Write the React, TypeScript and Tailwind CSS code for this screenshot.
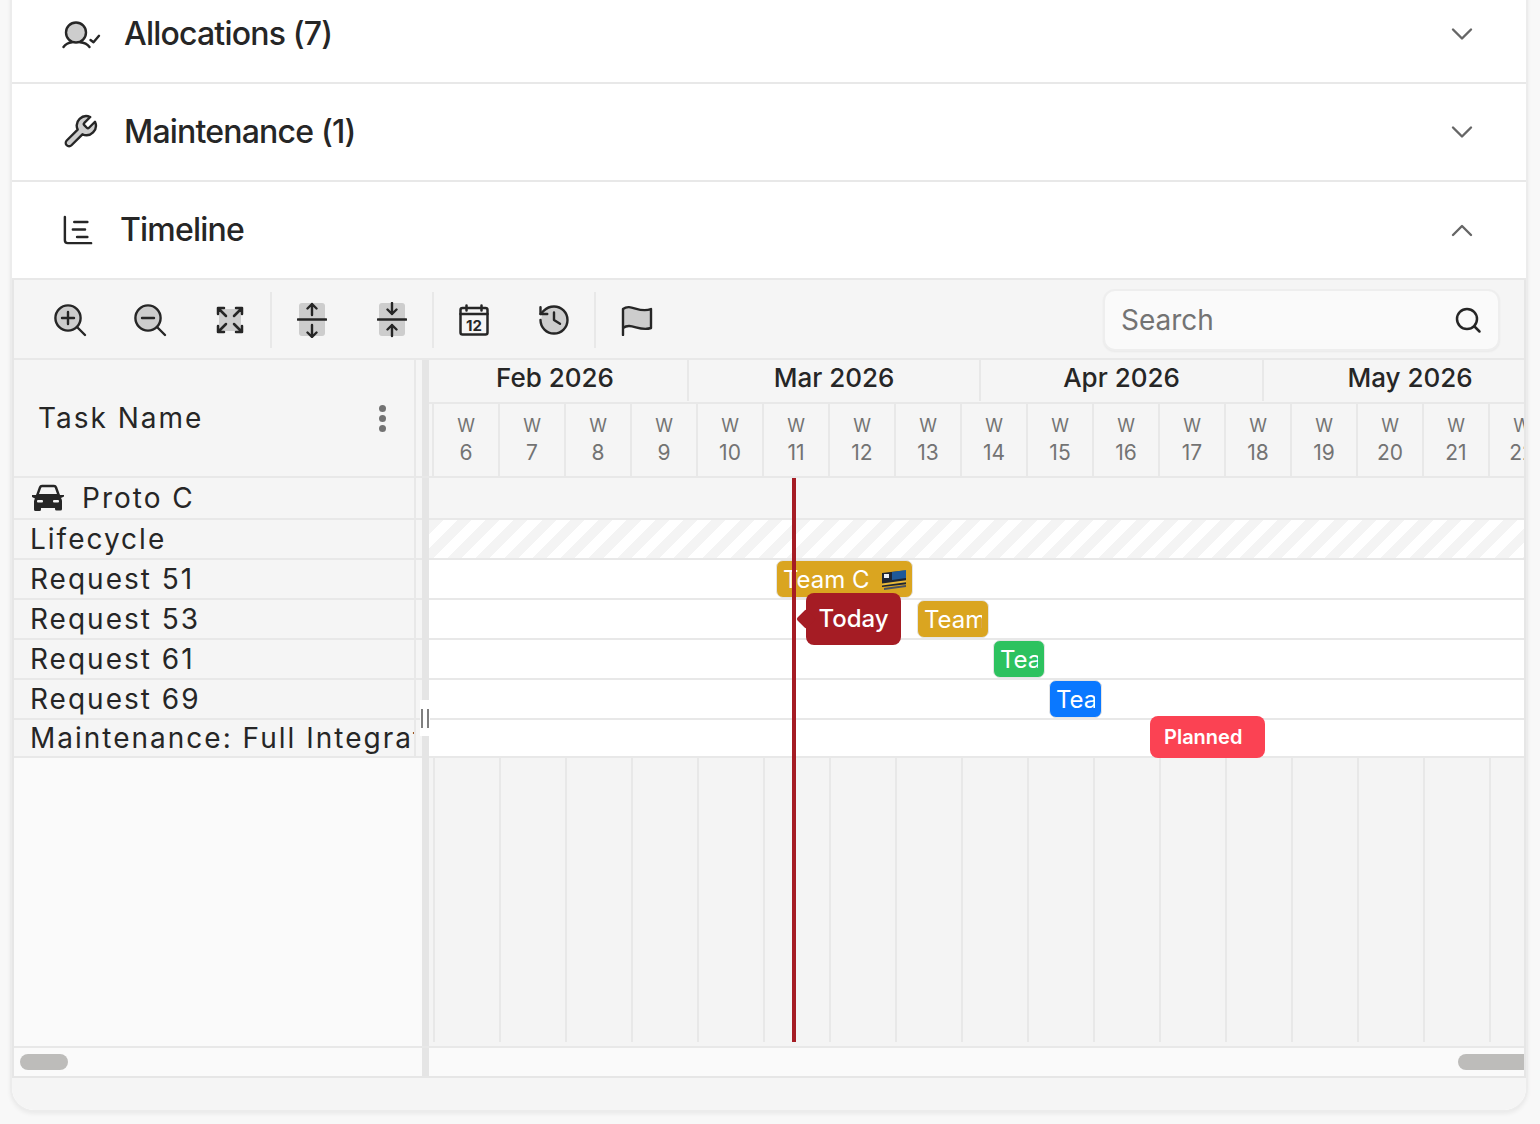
import { ReactNode } from 'react'

const INK = '#262626'
const FILL = '#cdcdcd'

const WEEKS = [6, 7, 8, 9, 10, 11, 12, 13, 14, 15, 16, 17, 18, 19, 20, 21, 22]

const TASKS = [
  { name: 'Lifecycle', row: 'h-[40px]' },
  { name: 'Request 51', row: 'h-[40px]' },
  { name: 'Request 53', row: 'h-[40px]' },
  { name: 'Request 61', row: 'h-[40px]' },
  { name: 'Request 69', row: 'h-[40px]' },
  { name: 'Maintenance: Full Integration', row: 'h-[38px]' },
]

function UserCheckIcon() {
  return (
    <svg width="40" height="36" viewBox="0 0 40 36" fill="none" stroke={INK} strokeWidth="2.4" strokeLinecap="round" strokeLinejoin="round">
      <circle cx="14" cy="16.5" r="10" fill={FILL} />
      <path d="M1.5 31C4 27.5 7 26.5 10 26.2M27.5 31C25 27.5 22 26.5 18 26.2" />
      <path d="M28.5 24l3 2.3 5.5-6.5" />
    </svg>
  )
}

function WrenchIcon() {
  return (
    <svg width="38" height="38" viewBox="0 0 24 24" fill={FILL} stroke={INK} strokeWidth="1.5" strokeLinecap="round" strokeLinejoin="round">
      <path d="M14.7 6.3a1 1 0 0 0 0 1.4l1.6 1.6a1 1 0 0 0 1.4 0l3.77-3.77a6 6 0 0 1-7.94 7.94l-6.91 6.91a2.12 2.12 0 0 1-3-3l6.91-6.91a6 6 0 0 1 7.94-7.94l-3.76 3.76z" />
    </svg>
  )
}

function TimelineIcon() {
  return (
    <svg width="30" height="30" viewBox="0 0 32 32" fill="none" stroke={INK} strokeWidth="2.6" strokeLinecap="round" strokeLinejoin="round">
      <path d="M2 2v25a3 3 0 0 0 3 3h25" />
      <path d="M12 7.500h14M10.500 15.500h13M15 23.500h11" />
    </svg>
  )
}

function Chevron({ up }: { up?: boolean }) {
  return (
    <svg width="24" height="16" viewBox="0 0 24 16" fill="none" stroke="#666666" strokeWidth="2.4" strokeLinecap="round" strokeLinejoin="round">
      <path d={up ? 'M3 13l9-9 9 9' : 'M3 3.500l9 9 9-9'} />
    </svg>
  )
}

function ZoomIcon({ plus }: { plus?: boolean }) {
  return (
    <svg width="36" height="36" viewBox="0 0 36 36" fill="none" stroke={INK} strokeWidth="2.4" strokeLinecap="round" strokeLinejoin="round">
      <circle cx="16" cy="16" r="12.600" fill={FILL} />
      <path d="M25.500 25.500L33 33" />
      <path d={plus ? 'M10 16h12M16 10v12' : 'M10 16h12'} />
    </svg>
  )
}

function ExpandIcon() {
  return (
    <svg width="28" height="28" viewBox="0 0 28 28" fill="none" stroke={INK} strokeWidth="2.500" strokeLinecap="round" strokeLinejoin="round">
      <rect x="3" y="3" width="22" height="22" fill={FILL} stroke="none" />
      <path d="M2 8V2h6M2 2l8 8M26 8V2h-6M26 2l-8 8M2 20v6h6M2 26l8-8M26 20v6h-6M26 26l-8-8" />
    </svg>
  )
}

function RowHeightIcon({ collapse }: { collapse?: boolean }) {
  return (
    <svg width="30" height="36" viewBox="0 0 30 36" fill="none" stroke={INK} strokeWidth="2.400" strokeLinecap="round" strokeLinejoin="round">
      <rect x="2" y="1" width="26" height="33" rx="3" fill={FILL} stroke="none" />
      <path d="M1 17.500h28" strokeWidth="2.600" />
      {collapse ? (
        <path d="M15 1v11M10.500 7.500l4.500 4.500 4.500-4.500M15 34V23M10.500 27.500l4.500-4.500 4.500 4.500" />
      ) : (
        <path d="M15 13V2M10.500 6.500L15 2l4.500 4.500M15 23v12M10.500 30.500L15 35l4.500-4.500" />
      )}
    </svg>
  )
}

function CalendarIcon() {
  return (
    <svg width="30" height="32" viewBox="0 0 30 32" fill="none" stroke={INK} strokeWidth="2.500" strokeLinecap="round" strokeLinejoin="round">
      <rect x="1.500" y="4" width="27" height="26.500" rx="2" />
      <path d="M7.500 1.500v5M22.500 1.500v5M1.500 10h27" />
      <text x="15" y="26.500" textAnchor="middle" fontFamily="Inter, sans-serif" fontSize="15" fontWeight="700" fill={INK} stroke="none">12</text>
    </svg>
  )
}

function HistoryIcon() {
  return (
    <svg width="36" height="36" viewBox="0 0 24 24" fill="none" stroke={INK} strokeWidth="1.600" strokeLinecap="round" strokeLinejoin="round">
      <path d="M4 9a9 9 0 0 0 8 12 9 9 0 0 0 4-17 9 9 0 0 0-4-1C9 3 7 4 5 6z" fill={FILL} stroke="none" />
      <path d="M3 12a9 9 0 1 0 9-9 9.750 9.750 0 0 0-6.740 2.740L3 8" />
      <path d="M3 3.500V8h4.500" />
      <path d="M12 7v5l4 2.500" />
    </svg>
  )
}

function FlagIcon() {
  return (
    <svg width="32" height="32" viewBox="0 0 32 32" fill="none" stroke={INK} strokeWidth="2.400" strokeLinecap="round" strokeLinejoin="round">
      <path d="M2 24V5C10-1 18 10 30 5v19c-12 4-20-6-28 0z" fill={FILL} stroke="none" />
      <path d="M2 31V5c8-6 16 5 28 0v19c-12 4-20-6-28 0" />
    </svg>
  )
}

function SearchIcon() {
  return (
    <svg width="28" height="28" viewBox="0 0 28 28" fill="none" stroke={INK} strokeWidth="2.500" strokeLinecap="round" strokeLinejoin="round">
      <circle cx="13" cy="13" r="10" />
      <path d="M20.500 20.500L25.500 25.500" />
    </svg>
  )
}

function CarIcon() {
  return (
    <svg width="34" height="28" viewBox="0 0 34 28" fill="none">
      <path d="M6 12L9 3.500Q9.500 2 11 2h12q1.500 0 2 1.500L28 12" stroke={INK} strokeWidth="2.400" />
      <path d="M1 11h4l2-1h20l2 1h4v1.500l-3 1.500q1 1.500 1 3v8q0 1.500-1.500 1.500h-4q-1.500 0-1.500-1.500V24H10v1.500Q10 27 8.500 27h-4Q3 27 3 25.500v-8q0-1.500 1-3l-3-1.500z" fill={INK} />
      <rect x="6" y="16" width="6" height="2.600" rx="1" fill="#f5f5f5" />
      <rect x="22" y="16" width="6" height="2.600" rx="1" fill="#f5f5f5" />
    </svg>
  )
}

function TinyFlag() {
  return (
    <svg width="28" height="24" viewBox="0 0 28 24" className="shrink-0">
      <path d="M1 5l26-3v14L1 19z" fill="#1d2533" />
      <path d="M11 4l14-2v8l-14 2z" fill="#1e6fc4" opacity="0.7" />
      <rect x="3" y="6" width="5" height="4" fill="#e8eef5" />
      <path d="M1 15.500l26-3.500v2L1 17.500z" fill="#e9b93a" />
      <path d="M3 20l22-3v2L3 22z" fill="#4a5160" />
    </svg>
  )
}

function SectionRow({ icon, title, open, gap }: { icon: ReactNode; title: string; open?: boolean; gap: string }) {
  return (
    <div className="flex h-[98px] items-center border-b-2 border-[#e8e8e8] bg-white pl-[50px] pr-[52px]">
      <div className={`flex w-[40px] items-center ${gap}`}>{icon}</div>
      <h2 className="flex-1 text-[32px] font-medium tracking-[-0.8px] text-[#262626]">{title}</h2>
      <Chevron up={open} />
    </div>
  )
}

function ToolButton({ children }: { children: ReactNode }) {
  return <button className="flex h-[78px] w-[80px] items-center justify-center">{children}</button>
}

function Divider() {
  return <div className="h-[56px] w-[2px] bg-[#e8e8e8]" />
}

function TimelineBar({ pos, color, children }: { pos: string; color: string; children: ReactNode }) {
  return (
    <div className={`absolute flex h-[38px] items-center rounded-[7px] border border-[#e5e5e5] pl-[6px] pr-[6px] pt-[1px] text-[24px] leading-none text-white ${pos} ${color}`}>
      <div className="flex min-w-0 items-center gap-[11px] overflow-hidden whitespace-nowrap">{children}</div>
    </div>
  )
}

export default function App() {
  return (
    <div className="h-[1124px] overflow-hidden bg-[#f8f8f8] font-[Inter,sans-serif]">
      <div className="-mt-[14px] ml-[10px] w-[1518px] overflow-hidden rounded-b-[24px] border-x-2 border-b-2 border-[#ececec] bg-white shadow-[0_2px_4px_rgba(0,0,0,0.06)]">
        <SectionRow icon={<UserCheckIcon />} title="Allocations (7)" gap="mr-[22px]" />
        <SectionRow icon={<div className="-ml-[1px] flex"><WrenchIcon /></div>} title="Maintenance (1)" gap="mr-[22px]" />
        <SectionRow icon={<TimelineIcon />} title="Timeline" open gap="mr-[17px] ml-[1px]" />

        <div className="border-x-2 border-[#e6e6e6] bg-[#f5f5f5]">
          {/* Toolbar */}
          <div className="flex h-[80px] items-center border-b-2 border-[#e8e8e8] pl-[16px] pr-[24px] pt-[2px]">
            <ToolButton><ZoomIcon plus /></ToolButton>
            <ToolButton><ZoomIcon /></ToolButton>
            <ToolButton><ExpandIcon /></ToolButton>
            <Divider />
            <ToolButton><RowHeightIcon /></ToolButton>
            <ToolButton><RowHeightIcon collapse /></ToolButton>
            <Divider />
            <ToolButton><CalendarIcon /></ToolButton>
            <ToolButton><HistoryIcon /></ToolButton>
            <Divider />
            <ToolButton><div className="ml-[2px] flex"><FlagIcon /></div></ToolButton>
            <div className="ml-auto flex h-[62px] w-[397px] items-center justify-between rounded-[12px] border-2 border-[#eeeeee] bg-[#fafafa] pl-[16px] pr-[16px] shadow-[0_1px_2px_rgba(0,0,0,0.05)]">
              <span className="text-[28px] text-[#737373]">Search</span>
              <SearchIcon />
            </div>
          </div>

          {/* Gantt header */}
          <div className="flex h-[118px] border-b-2 border-[#e8e8e8]">
            <div className="flex w-[402px] items-center justify-between border-r-2 border-[#e8e8e8] pl-[24px] pr-[28px]">
              <span className="text-[28px] tracking-[2px] text-[#262626]">Task Name</span>
              <div className="flex flex-col gap-[3px]">
                <div className="h-[7px] w-[7px] rounded-full bg-[#737373]" />
                <div className="h-[7px] w-[7px] rounded-full bg-[#737373]" />
                <div className="h-[7px] w-[7px] rounded-full bg-[#737373]" />
              </div>
            </div>
            <div className="w-[6px]" />
            <div className="w-[7px] bg-[#e5e5e5]" />
            <div className="min-w-0 flex-1 overflow-hidden">
              <div className="-ml-[6px] flex h-[44px] w-[1140px] border-b-2 border-[#e8e8e8] pb-[1px] text-[26px] font-medium leading-[36px] text-[#262626]">
                <div className="w-[266px] shrink-0 border-r-2 border-[#e8e8e8] text-center">Feb 2026</div>
                <div className="w-[292px] shrink-0 border-r-2 border-[#e8e8e8] text-center">Mar 2026</div>
                <div className="w-[283px] shrink-0 border-r-2 border-[#e8e8e8] text-center">Apr 2026</div>
                <div className="w-[292px] shrink-0 text-center">May 2026</div>
              </div>
              <div className="flex h-[72px]">
                <div className="w-[5px] shrink-0 border-r-2 border-[#e8e8e8]" />
                {WEEKS.map((w) => (
                  <div key={w} className="flex w-[66px] shrink-0 flex-col items-center justify-center border-r-2 border-[#e8e8e8] pb-[2px] leading-[27px] text-[#737373]">
                    <span className="text-[18px]">W</span>
                    <span className="text-[21px]">{w}</span>
                  </div>
                ))}
              </div>
            </div>
          </div>

          {/* Gantt body */}
          <div className="relative flex h-[570px] border-b-2 border-[#e8e8e8]">
            <div className="w-[408px] bg-[#fafafa] text-[28px] tracking-[2px] text-[#262626]">
              <div className="flex h-[42px] border-b-2 border-[#e8e8e8] bg-[#f5f5f5]">
                <div className="flex w-[402px] items-center gap-[17px] border-r-2 border-[#e8e8e8] pl-[17px]">
                  <CarIcon />
                  <span>Proto C</span>
                </div>
              </div>
              {TASKS.map((t) => (
                <div key={t.name} className={`flex border-b-2 border-[#e8e8e8] bg-[#f5f5f5] ${t.row}`}>
                  <div className="flex w-[402px] items-center overflow-hidden whitespace-nowrap border-r-2 border-[#e8e8e8] pl-[16px]">{t.name}</div>
                </div>
              ))}
            </div>
            <div className="w-[7px] bg-[#e5e5e5]" />

            <div className="relative min-w-0 flex-1 overflow-hidden">
              <div className="h-[42px] border-b-2 border-[#e8e8e8] bg-[#f5f5f5]" />
              <div className="h-[40px] border-b-2 border-[#e8e8e8] bg-[repeating-linear-gradient(135deg,#f4f4f4_0,#f4f4f4_10px,#ffffff_10px,#ffffff_20px)]" />
              <div className="h-[40px] border-b-2 border-[#e8e8e8] bg-white" />
              <div className="h-[40px] border-b-2 border-[#e8e8e8] bg-white" />
              <div className="h-[40px] border-b-2 border-[#e8e8e8] bg-white" />
              <div className="h-[40px] border-b-2 border-[#e8e8e8] bg-white" />
              <div className="h-[38px] border-b-2 border-[#e8e8e8] bg-white" />
              <div className="flex h-[288px] bg-[#f4f4f4]">
                <div className="h-[284px] w-[6px] shrink-0 border-r-2 border-[#e8e8e8]" />
                {WEEKS.map((w) => (
                  <div key={w} className="h-[284px] w-[66px] shrink-0 border-r-2 border-[#e8e8e8]" />
                ))}
              </div>

              <TimelineBar pos="left-[347px] top-[82px] w-[137px]" color="bg-[#daa520]">
                <span>Team C</span>
                <TinyFlag />
              </TimelineBar>
              <TimelineBar pos="left-[488px] top-[122px] w-[72px]" color="bg-[#daa520]">Team C</TimelineBar>
              <TimelineBar pos="left-[564px] top-[162px] w-[52px]" color="bg-[#2dc25f]">Team A</TimelineBar>
              <TimelineBar pos="left-[620px] top-[202px] w-[53px]" color="bg-[#0a78ff]">Team B</TimelineBar>

              <div className="absolute left-[721px] top-[238px] flex h-[42px] w-[115px] items-center rounded-[8px] bg-[#fb4253] pl-[14px] text-[20px] font-semibold text-white">Planned</div>

              {/* Today marker */}
              <div className="absolute left-[363px] top-0 h-[564px] w-[4px] bg-[#a51c24]" />
              <div className="absolute left-[377px] top-[115px] flex h-[52px] w-[95px] items-center justify-center rounded-[8px] bg-[#a51c24] text-[24px] font-medium text-white">
                <div className="absolute -left-[7px] top-[19px] h-[14px] w-[14px] rotate-45 rounded-[2px] bg-[#a51c24]" />
                <span className="relative">Today</span>
              </div>
            </div>

            {/* Splitter handle */}
            <div className="absolute left-[406px] top-[222px] flex h-[36px] w-[10px] items-center justify-between bg-white px-[1px]">
              <div className="h-[19px] w-[2px] bg-[#808080]" />
              <div className="h-[19px] w-[2px] bg-[#808080]" />
            </div>
          </div>

          {/* Scrollbars */}
          <div className="flex h-[28px] bg-[#fafafa]">
            <div className="flex w-[408px] items-center pl-[6px]">
              <div className="h-[16px] w-[48px] rounded-full bg-[#bdbcba]" />
            </div>
            <div className="w-[7px] bg-[#e5e5e5]" />
            <div className="flex min-w-0 flex-1 items-center justify-end">
              <div className="h-[16px] w-[66px] rounded-l-full bg-[#bdbcba]" />
            </div>
          </div>
        </div>

        <div className="h-[34px] border-t-2 border-[#e6e6e6] bg-[#f5f5f5]" />
      </div>
    </div>
  )
}
